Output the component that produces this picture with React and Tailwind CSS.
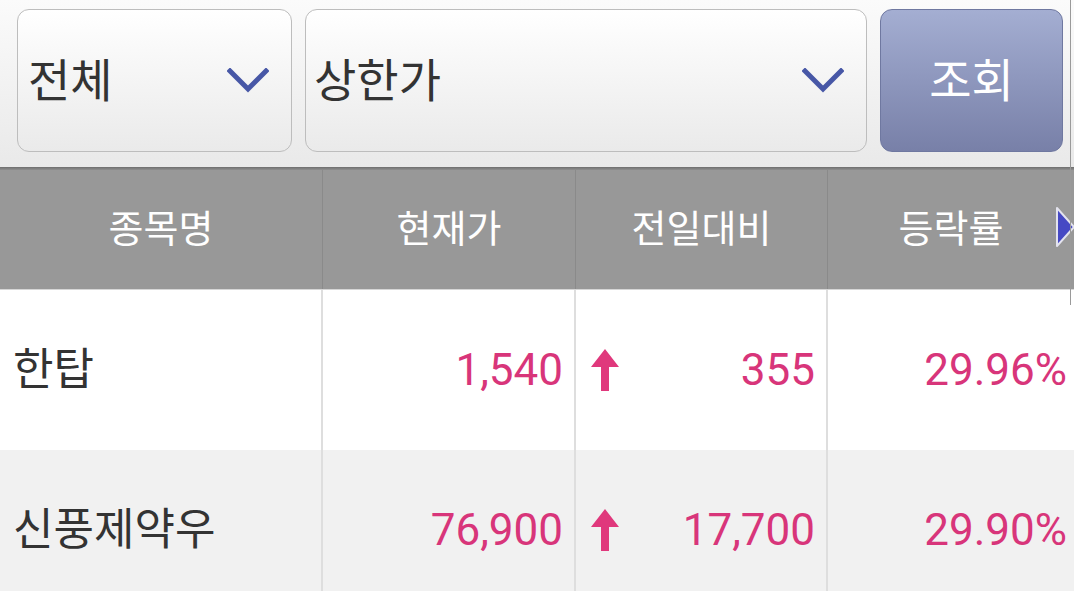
import React from 'react';

const rows = [
  { name: '한탑', price: '1,540', diff: '355', rate: '29.96%' },
  { name: '신풍제약우', price: '76,900', diff: '17,700', rate: '29.90%' },
];

const Chevron = () => (
  <svg width="42" height="26" viewBox="0 0 42 26" fill="none">
    <path d="M3 3 L21 21 L39 3" stroke="#4757a6" strokeWidth="5" strokeLinecap="square" />
  </svg>
);

const UpArrow = () => (
  <svg width="30" height="44" viewBox="0 0 30 44">
    <path d="M15 1 L29 19 L19 19 L19 43 L11 43 L11 19 L1 19 Z" fill="#e0387c" />
  </svg>
);

const App = () => {
  return (
    <div
      className="w-[1074px] h-[591px] overflow-hidden bg-white relative"
      style={{ fontFamily: 'Roboto, "Noto Sans CJK KR", sans-serif' }}
    >
      {/* search bar */}
      <div className="h-[167px] flex gap-[13px] pl-[17px] pr-[11px] pt-[9px] bg-gradient-to-b from-[#fbfbfb] to-[#e9e9e9]">
        <div className="w-[275px] h-[143px] rounded-[12px] border border-[#bdbdbd] bg-gradient-to-b from-white to-[#eaeaea] flex items-center justify-between pl-[10px] pr-[22px]">
          <span className="text-[46px] text-[#333] leading-none">전체</span>
          <Chevron />
        </div>
        <div className="flex-1 h-[143px] rounded-[12px] border border-[#bdbdbd] bg-gradient-to-b from-white to-[#eaeaea] flex items-center justify-between pl-[8px] pr-[22px]">
          <span className="text-[46px] text-[#333] leading-none">상한가</span>
          <Chevron />
        </div>
        <div className="w-[183px] h-[143px] rounded-[12px] border border-[#6f78a0] bg-gradient-to-b from-[#a4aed2] to-[#7880a8] flex items-center justify-center">
          <span className="text-[46px] text-white leading-none">조회</span>
        </div>
      </div>
      <div className="h-[3px] bg-gradient-to-b from-[#6e6e6e] to-[#8f8f8f]" />

      {/* header */}
      <div className="h-[120px] bg-[#989898] flex text-white text-[38px] border-b border-[#d6d6d6]">
        <div className="w-[323px] flex items-center justify-center border-r border-[#8a8a8a]">종목명</div>
        <div className="w-[253px] flex items-center justify-center border-r border-[#8a8a8a]">현재가</div>
        <div className="w-[252px] flex items-center justify-center border-r border-[#8a8a8a]">전일대비</div>
        <div className="flex-1 flex items-center justify-center">등락률</div>
      </div>

      {/* rows */}
      {rows.map((r, i) => (
        <div
          key={r.name}
          className={`h-[160px] flex text-[44px] ${i % 2 === 1 ? 'bg-[#f1f1f1]' : 'bg-white'}`}
        >
          <div className="w-[323px] flex items-center pl-[13px] border-r-2 border-[#dedede] text-[#333]">{r.name}</div>
          <div className="w-[253px] flex items-center justify-end pr-[11px] border-r-2 border-[#dedede] text-[#d8357a]">{r.price}</div>
          <div className="w-[252px] flex items-center justify-between pl-[14px] pr-[11px] border-r-2 border-[#dedede] text-[#d8357a]">
            <UpArrow />
            <span>{r.diff}</span>
          </div>
          <div className="flex-1 flex items-center justify-end pr-[7px] text-[#d8357a]">{r.rate}</div>
        </div>
      ))}

      {/* scroll hint */}
      <div className="absolute right-0 top-[205px]">
        <svg width="20" height="44" viewBox="0 0 20 44">
          <path d="M3 3 L20 22 L3 41 Z" fill="#4649c4" stroke="#e3e3ee" strokeWidth="2" strokeLinejoin="round" />
        </svg>
      </div>
      <div className="absolute right-[3px] top-[0px] w-[1px] h-[305px] bg-[#9a9a9a]" />
    </div>
  );
};

export default App;
